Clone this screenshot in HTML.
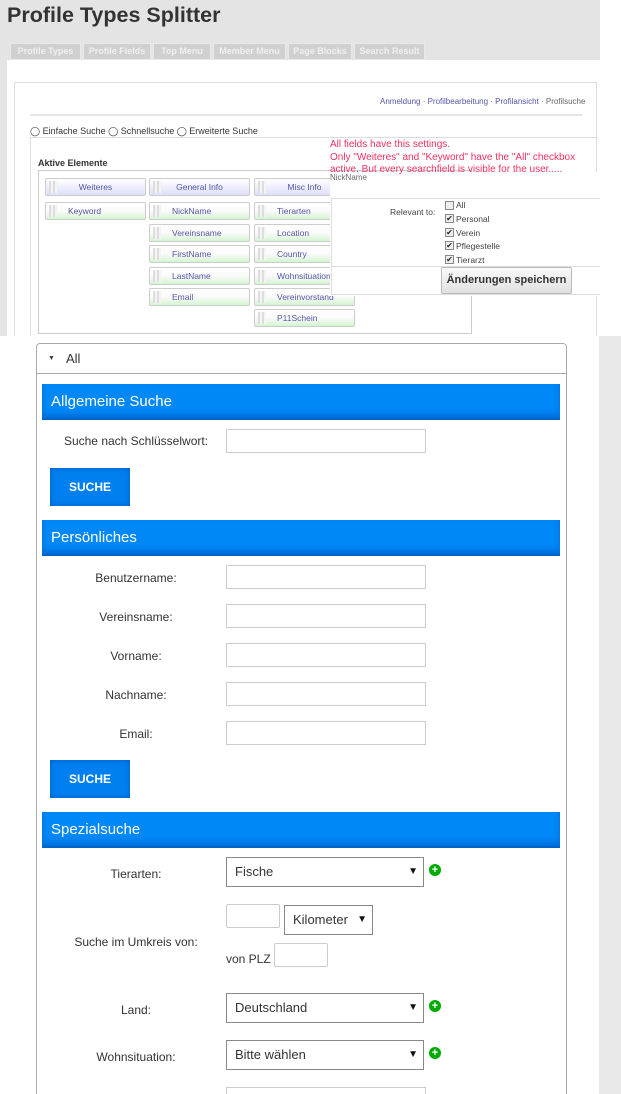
<!DOCTYPE html>
<html><head><meta charset="utf-8"><style>
*{box-sizing:border-box;margin:0;padding:0}
html,body{width:621px;height:1094px;overflow:hidden}
body{position:relative;background:#fff;font-family:"Liberation Sans",sans-serif}
.a{position:absolute}
.tab{position:absolute;top:43px;height:17px;background:#d0d0d0;border:1px solid #e8e8e8;color:#f0f0f0;font-size:9px;font-weight:bold;line-height:15px;text-align:center}
.it{position:absolute;width:101px;height:18px;border:1px solid #ccc;border-radius:2px;background:linear-gradient(#fff 0,#fafafa 50%,#d4f5d0 100%);font-size:8.5px;color:#55a;line-height:16px;padding-left:22px}
.it:before{content:"";position:absolute;left:3px;top:2px;width:8px;height:12px;background:repeating-linear-gradient(90deg,#ddd 0 2px,#f4f4f4 2px 4px)}
.hd{background:linear-gradient(#fff,#dde0fa);text-align:center;padding-left:0}
.bar{position:absolute;left:42px;width:518px;height:36px;background:#0088f8;border-bottom:2px solid #0064c8;color:#fff;font-size:15px;line-height:36px;padding-left:9px;box-shadow:inset 0 -4px 6px rgba(0,60,160,.35)}
.lbl{position:absolute;left:50px;width:172px;text-align:center;font-size:12px;color:#333}
.in{position:absolute;left:226px;width:200px;height:24px;border:1px solid #ccc;background:#fff}
.btn{position:absolute;left:50px;width:80px;height:38px;background:#0080f0;color:#fff;font-weight:bold;font-size:12px;text-align:center;line-height:38px;box-shadow:inset 0 0 6px rgba(0,50,150,.5)}
.sel{position:absolute;left:226px;width:198px;height:30px;border:1px solid #888;font-size:13px;color:#333;line-height:28px;padding-left:8px}
.sel:after{content:"▼";position:absolute;right:5px;top:0;font-size:10px;color:#111}
.plus{position:absolute;left:429px;width:12px;height:12px;border-radius:50%;background:#0a0;color:#fff;font-size:11px;font-weight:bold;line-height:12px;text-align:center}
.cb{position:absolute;left:445px;width:9px;height:9px;border:1px solid #888;background:#eee;font-size:8px;line-height:8px;text-align:center;color:#222}
.ct{position:absolute;left:456px;font-size:8.5px;color:#444}
</style></head><body>
<div class="a" style="left:0;top:0;width:600px;height:336px;background:#e4e4e4"></div>
<div class="a" style="left:599px;top:336px;width:22px;height:758px;background:#e9e9e9"></div>
<div class="a" style="left:7px;top:3px;font-size:21.5px;font-weight:bold;color:#333">Profile Types Splitter</div>
<div class="tab" style="left:10px;width:71px">Profile Types</div>
<div class="tab" style="left:83px;width:68px">Profile Fields</div>
<div class="tab" style="left:153px;width:58px">Top Menu</div>
<div class="tab" style="left:213px;width:73px">Member Menu</div>
<div class="tab" style="left:288px;width:64px">Page Blocks</div>
<div class="tab" style="left:354px;width:71px">Search Result</div>
<div class="a" style="left:7px;top:60px;width:593px;height:276px;background:#fff"></div>
<div class="a" style="left:14px;top:82px;width:583px;height:254px;border:1px solid #ddd;border-bottom:none"></div>
<div class="a" style="left:380px;top:97px;font-size:8px;color:#55a">Anmeldung · Profilbearbeitung · Profilansicht · <span style="color:#666">Profilsuche</span></div>
<div class="a" style="left:30px;top:114px;width:552px;height:2px;background:#e6e6e6"></div>
<div class="a" style="left:30px;top:126px;font-size:9px;color:#333">◯ Einfache Suche ◯ Schnellsuche ◯ Erweiterte Suche</div>
<div class="a" style="left:30px;top:137px;width:568px;height:199px;border-top:1px solid #ddd;border-left:1px solid #ddd"></div>
<div class="a" style="left:38px;top:158px;font-size:9px;color:#333;font-weight:bold">Aktive Elemente</div>
<div class="a" style="left:38px;top:170px;width:434px;height:164px;border:1px solid #ccc"></div>
<div class="it hd" style="left:45px;top:178px">Weiteres</div>
<div class="it hd" style="left:149px;top:178px">General Info</div>
<div class="it hd" style="left:254px;top:178px">Misc Info</div>
<div class="it" style="left:45px;top:202px">Keyword</div>
<div class="it" style="left:149px;top:202px">NickName</div>
<div class="it" style="left:149px;top:224px">Vereinsname</div>
<div class="it" style="left:149px;top:245px">FirstName</div>
<div class="it" style="left:149px;top:267px">LastName</div>
<div class="it" style="left:149px;top:288px">Email</div>
<div class="it" style="left:254px;top:202px">Tierarten</div>
<div class="it" style="left:254px;top:224px">Location</div>
<div class="it" style="left:254px;top:245px">Country</div>
<div class="it" style="left:254px;top:267px">Wohnsituation</div>
<div class="it" style="left:254px;top:288px">Vereinvorstand</div>
<div class="it" style="left:254px;top:309px">P11Schein</div>
<div class="a" style="left:330px;top:172px;width:270px;height:124px;background:#fff"></div>
<div class="a" style="left:330px;top:139px;width:270px;line-height:12.5px;font-size:10px;color:#f03060">All fields have this settings.<br>Only "Weiteres" and "Keyword" have the "All" checkbox<br>active. But every searchfield is visible for the user.....</div>
<div class="a" style="left:330px;top:173px;font-size:8px;color:#666">NickName</div>
<div class="a" style="left:331px;top:198px;width:269px;height:97px;border:1px solid #ddd;border-right:none"></div>
<div class="a" style="left:331px;top:266px;width:269px;height:1px;background:#ddd"></div>
<div class="a" style="left:390px;top:207px;font-size:8.5px;color:#444">Relevant to:</div>
<div class="cb" style="top:201px"></div><div class="ct" style="top:200px">All</div>
<div class="cb" style="top:214px">✔</div><div class="ct" style="top:214px">Personal</div>
<div class="cb" style="top:228px">✔</div><div class="ct" style="top:228px">Verein</div>
<div class="cb" style="top:241px">✔</div><div class="ct" style="top:241px">Pflegestelle</div>
<div class="cb" style="top:255px">✔</div><div class="ct" style="top:255px">Tierarzt</div>
<div class="a" style="left:441px;top:267px;width:131px;height:27px;border:1px solid #bbb;border-radius:2px;background:linear-gradient(#fafafa,#e0e0e0);font-size:11px;font-weight:bold;color:#333;text-align:center;line-height:25px">Änderungen speichern</div>

<div class="a" style="left:36px;top:343px;width:531px;height:760px;border:1px solid #aaa;border-radius:4px 4px 0 0"></div>
<div class="a" style="left:37px;top:373px;width:529px;height:1px;background:#aaa"></div>
<div class="a" style="left:48px;top:355px;font-size:7px;color:#444">▼</div>
<div class="a" style="left:66px;top:351px;font-size:13px;color:#333">All</div>
<div class="bar" style="top:384px">Allgemeine Suche</div>
<div class="lbl" style="top:434px">Suche nach Schlüsselwort:</div><div class="in" style="top:429px"></div>
<div class="btn" style="top:468px">SUCHE</div>
<div class="bar" style="top:520px">Persönliches</div>
<div class="lbl" style="top:571px">Benutzername:</div><div class="in" style="top:565px"></div>
<div class="lbl" style="top:610px">Vereinsname:</div><div class="in" style="top:604px"></div>
<div class="lbl" style="top:649px">Vorname:</div><div class="in" style="top:643px"></div>
<div class="lbl" style="top:688px">Nachname:</div><div class="in" style="top:682px"></div>
<div class="lbl" style="top:727px">Email:</div><div class="in" style="top:721px"></div>
<div class="btn" style="top:760px">SUCHE</div>
<div class="bar" style="top:812px">Spezialsuche</div>
<div class="lbl" style="top:867px">Tierarten:</div>
<div class="sel" style="top:857px">Fische</div><div class="plus" style="top:864px">+</div>
<div class="a" style="left:226px;top:904px;width:54px;height:24px;border:1px solid #ccc;border-radius:2px"></div>
<div class="sel" style="left:284px;top:905px;width:89px;font-size:13px">Kilometer</div>
<div class="lbl" style="top:935px">Suche im Umkreis von:</div>
<div class="a" style="left:226px;top:952px;font-size:12px;color:#333">von PLZ</div>
<div class="a" style="left:274px;top:943px;width:54px;height:24px;border:1px solid #ccc;border-radius:2px"></div>
<div class="lbl" style="top:1003px">Land:</div>
<div class="sel" style="top:993px">Deutschland</div><div class="plus" style="top:1000px">+</div>
<div class="lbl" style="top:1050px">Wohnsituation:</div>
<div class="sel" style="top:1040px">Bitte wählen</div><div class="plus" style="top:1047px">+</div>
<div class="a" style="left:226px;top:1087px;width:200px;height:20px;border:1px solid #ccc"></div>
</body></html>
